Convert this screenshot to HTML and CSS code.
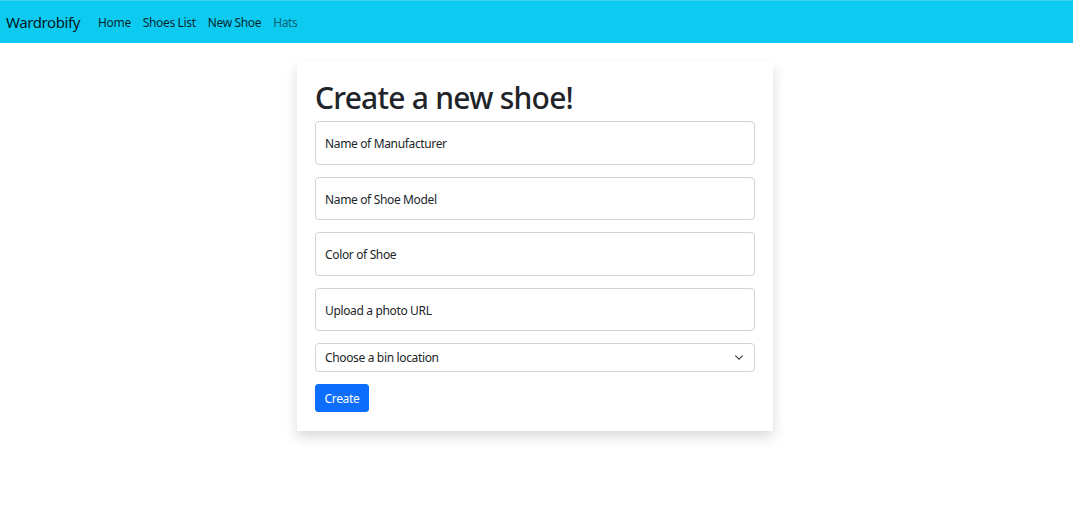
FILE: index.html
```html
<!DOCTYPE html>
<html lang="en">
<head>
<meta charset="utf-8">
<title>Wardrobify</title>
<link rel="stylesheet" href="styles.css">
</head>
<body>
<nav class="navbar">
  <a class="brand" href="#">Wardrobify</a>
  <ul class="nav-links">
    <li><a class="nav-link active" href="#">Home</a></li>
    <li><a class="nav-link active" href="#">Shoes List</a></li>
    <li><a class="nav-link active" href="#">New Shoe</a></li>
    <li><a class="nav-link" href="#">Hats</a></li>
  </ul>
</nav>
<main class="page">
  <div class="card">
    <h1 class="title">Create a new shoe!</h1>
    <form class="form">
      <div class="floating"><input class="field" type="text" aria-label="Name of Manufacturer"><span class="float-label">Name of Manufacturer</span></div>
      <div class="floating"><input class="field" type="text" aria-label="Name of Shoe Model"><span class="float-label">Name of Shoe Model</span></div>
      <div class="floating"><input class="field" type="text" aria-label="Color of Shoe"><span class="float-label">Color of Shoe</span></div>
      <div class="floating"><input class="field" type="text" aria-label="Upload a photo URL"><span class="float-label">Upload a photo URL</span></div>
      <div class="select-wrap">
        <select class="select"><option>Choose a bin location</option></select>
        <svg class="chevron" width="12" height="9" viewBox="0 0 16 16"><path fill="none" stroke="#343a40" stroke-linecap="round" stroke-linejoin="round" stroke-width="2" d="m2 5 6 6 6-6"/></svg>
      </div>
      <div class="actions"><button class="btn" type="button">Create</button></div>
    </form>
  </div>
</main>
</body>
</html>
```
FILE: styles.css
```css
* { box-sizing: border-box; }
html, body { margin: 0; padding: 0; background: #fff; }
body {
  font-family: "Noto Sans", "Open Sans", "Liberation Sans", sans-serif;
  color: #212529;
  font-size: 12px;
  letter-spacing: -0.35px;
  min-height: 100vh;
}
.navbar {
  background: #0dcaf0;
  height: 43px;
  display: flex;
  align-items: center;
  padding: 0 6px;
  border-top: 1px solid #3fd0ef;
}
.brand {
  font-size: 15px;
  letter-spacing: -0.4px;
  color: rgba(0,0,0,0.9);
  text-decoration: none;
  margin-right: 12px;
  line-height: 22px;
}
.nav-links {
  display: flex;
  list-style: none;
  margin: 0;
  padding: 0;
}
.nav-link {
  display: block;
  padding: 6px 6px;
  font-size: 12px;
  color: rgba(0,0,0,0.55);
  text-decoration: none;
}
.nav-link.active { color: rgba(0,0,0,0.85); }
.page {
  padding: 19px 0 40px 297px;
}
.card {
  width: 476px;
  padding: 18px 18px 19px;
  background: #fff;
  box-shadow: 0 6px 12px rgba(0,0,0,0.15);
}
.title {
  margin: 0 0 5px;
  font-size: 30px;
  font-weight: 500;
  line-height: 36px;
  letter-spacing: -0.75px;
  color: #212529;
}
.form { display: flex; flex-direction: column; }
.floating {
  position: relative;
  margin-bottom: 12px;
}
.field {
  display: block;
  width: 100%;
  height: 43.5px;
  border: 1px solid #ced4da;
  border-radius: 4px;
  padding: 0 9px;
  font-family: inherit;
  font-size: 12px;
  color: transparent;
  background: #fff;
}
.float-label {
  position: absolute;
  left: 10px;
  top: 1px;
  height: 43.5px;
  display: flex;
  align-items: center;
  font-size: 12px;
  color: #212529;
  pointer-events: none;
}
.select-wrap {
  position: relative;
  margin-bottom: 12px;
}
.select {
  display: block;
  width: 100%;
  height: 28.5px;
  appearance: none;
  -webkit-appearance: none;
  border: 1px solid #ced4da;
  border-radius: 4px;
  padding: 1px 27px 0 9px;
  font-family: inherit;
  font-size: 12px;
  letter-spacing: -0.35px;
  color: #212529;
  background: #fff;
}
.chevron {
  position: absolute;
  right: 10px;
  top: 10px;
}
.actions { display: flex; }
.btn {
  background: #0d6efd;
  border: 1px solid #0d6efd;
  color: #fff;
  font-family: inherit;
  font-size: 12px;
  letter-spacing: -0.35px;
  height: 28px;
  width: 54px;
  padding: 2px 0 0;
  border-radius: 3px;
}
```
